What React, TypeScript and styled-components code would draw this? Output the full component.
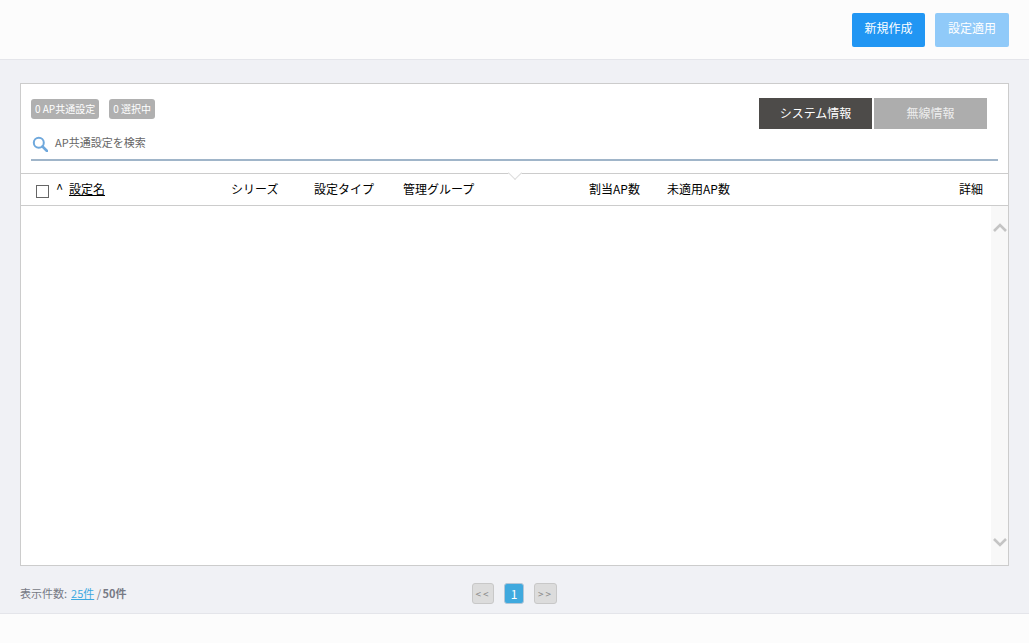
import React from "react";
import styled, { createGlobalStyle } from "styled-components";

const Global = createGlobalStyle`
  html, body { margin: 0; padding: 0; height: 100%; overflow: hidden; }
  body { font-family: "Noto Sans CJK JP", "Noto Sans", sans-serif; background: #f0f1f5; }
  * { box-sizing: border-box; }
`;

const Page = styled.div`
  display: flex;
  flex-direction: column;
  width: 1029px;
  height: 643px;
  background: #f0f1f5;
`;

const TopBar = styled.header`
  display: flex;
  justify-content: flex-end;
  gap: 10px;
  height: 60px;
  padding: 13px 20px 0 0;
  background: #fcfcfc;
  border-bottom: 1px solid #e4e5ea;
`;

const ActionButton = styled.button<{ $muted?: boolean }>`
  width: ${(p) => (p.$muted ? 74 : 73)}px;
  height: 34px;
  padding: 0 0 6px;
  border: 0;
  border-radius: 2px;
  background: ${(p) => (p.$muted ? "#90caf9" : "#2196f3")};
  color: #fff;
  font: inherit;
  font-size: 12px;
`;

const Card = styled.section`
  display: flex;
  flex-direction: column;
  width: 989px;
  height: 483px;
  margin: 23px 0 0 20px;
  background: #fff;
  border: 1px solid #ccc;
`;

const CardTop = styled.div`
  display: flex;
  justify-content: space-between;
  height: 53px;
  padding: 14px 21px 0 10px;
`;

const BadgeRow = styled.div`
  display: flex;
  gap: 10px;
  padding-top: 1px;
`;

const Badge = styled.span`
  height: 20px;
  padding: 0 4px;
  border-radius: 3px;
  background: #b0b0b0;
  color: #fff;
  font-size: 10px;
  line-height: 19px;
  white-space: nowrap;
`;

const TabRow = styled.div`
  display: flex;
  gap: 2px;
`;

const Tab = styled.div<{ $active?: boolean }>`
  width: 113px;
  height: 31px;
  background: ${(p) => (p.$active ? "#4d4b49" : "#adadad")};
  color: ${(p) => (p.$active ? "#fff" : "#eee")};
  font-size: 12px;
  line-height: 29px;
  text-align: center;
`;

const SearchBar = styled.div`
  display: flex;
  align-items: center;
  gap: 7px;
  height: 24px;
  margin: 0 10px;
  padding: 0 0 0 1px;
  border-bottom: 2px solid #a0b5c9;
`;

const SearchHint = styled.span`
  color: #666;
  font-size: 11px;
  line-height: 14px;
  position: relative;
  top: -6px;
`;

const SearchIcon = styled.svg`
  width: 16px;
  height: 16px;
  flex: none;
  position: relative;
  top: -4px;
`;

const HeadRow = styled.div`
  position: relative;
  display: flex;
  align-items: center;
  height: 33px;
  margin-top: 12px;
  padding: 0 0 2px 15px;
  border-top: 1px solid #ccc;
  border-bottom: 1px solid #ccc;
  color: #000;
  font-size: 12px;
`;

const Notch = styled.span`
  position: absolute;
  left: 489px;
  top: -6px;
  width: 10px;
  height: 10px;
  background: #fff;
  border-right: 1px solid #ddd;
  border-bottom: 1px solid #ddd;
  transform: rotate(45deg);
`;

const Check = styled.span`
  flex: none;
  width: 13px;
  height: 13px;
  margin: 5px 7px 0 0;
  border: 1px solid #666;
  background: #fff;
`;

const Caret = styled.span`
  flex: none;
  width: 13px;
  font-size: 13px;
`;

const Col = styled.span<{ $w: number; $link?: boolean }>`
  flex: none;
  width: ${(p) => p.$w}px;
  text-decoration: ${(p) => (p.$link ? "underline" : "none")};
  white-space: nowrap;
`;

const Body = styled.div`
  flex: 1;
  display: flex;
  justify-content: flex-end;
`;

const ScrollTrack = styled.div`
  display: flex;
  flex-direction: column;
  justify-content: space-between;
  align-items: center;
  width: 17px;
  padding: 17px 0 18px;
  background: #f8f8f8;
`;

const Chevron = styled.svg`
  width: 14px;
  height: 9px;
`;

const BottomRow = styled.div`
  display: grid;
  grid-template-columns: 1fr auto 1fr;
  align-items: center;
  height: 47px;
  padding: 7px 20px 0;
  color: #777a85;
  font-size: 11px;
`;

const CountInfo = styled.div`
  white-space: nowrap;
`;

const CountLink = styled.span`
  color: #3ba8e0;
  text-decoration: underline;
  margin-left: 4px;
`;

const CountTotal = styled.strong`
  font-weight: 700;
  margin-left: -1px;
`;

const Pager = styled.nav`
  display: flex;
  gap: 10px;
`;

const PageBtn = styled.span<{ $on?: boolean; $w: number }>`
  width: ${(p) => p.$w}px;
  height: 21px;
  border: 1px solid ${(p) => (p.$on ? "#b4c6d6" : "#c8c8c8")};
  border-radius: 3px;
  background: ${(p) => (p.$on ? "#3fa9de" : "#dcdcdc")};
  color: ${(p) => (p.$on ? "#fff" : "#888")};
  font-size: ${(p) => (p.$on ? 12 : 10)}px;
  line-height: 19px;
  text-align: center;
  letter-spacing: ${(p) => (p.$on ? 0 : 2)}px;
`;

const BottomBar = styled.footer`
  flex: 1;
  background: #fcfcfc;
  border-top: 1px solid #e4e5ea;
`;

export default function App() {
  return (
    <Page>
      <Global />
      <TopBar>
        <ActionButton>新規作成</ActionButton>
        <ActionButton $muted>設定適用</ActionButton>
      </TopBar>
      <Card>
        <CardTop>
          <BadgeRow>
            <Badge>0 AP共通設定</Badge>
            <Badge>0 選択中</Badge>
          </BadgeRow>
          <TabRow>
            <Tab $active>システム情報</Tab>
            <Tab>無線情報</Tab>
          </TabRow>
        </CardTop>
        <SearchBar>
          <SearchIcon viewBox="0 0 16 16" fill="none" stroke="#6fa8dc">
            <circle cx="6.8" cy="6.8" r="5" strokeWidth="2" />
            <path d="M10.5 10.5L15 15" strokeWidth="2.6" strokeLinecap="round" />
          </SearchIcon>
          <SearchHint>AP共通設定を検索</SearchHint>
        </SearchBar>
        <HeadRow>
          <Notch />
          <Check />
          <Caret>^</Caret>
          <Col $w={162} $link>設定名</Col>
          <Col $w={83}>シリーズ</Col>
          <Col $w={89}>設定タイプ</Col>
          <Col $w={186}>管理グループ</Col>
          <Col $w={78}>割当AP数</Col>
          <Col $w={292}>未適用AP数</Col>
          <Col $w={24}>詳細</Col>
        </HeadRow>
        <Body>
          <ScrollTrack>
            <Chevron viewBox="0 0 14 9" fill="none" stroke="#c4c4c4" strokeWidth="2.6">
              <path d="M1 8l6-6 6 6" />
            </Chevron>
            <Chevron viewBox="0 0 14 9" fill="none" stroke="#c4c4c4" strokeWidth="2.6">
              <path d="M1 1l6 6 6-6" />
            </Chevron>
          </ScrollTrack>
        </Body>
      </Card>
      <BottomRow>
        <CountInfo>
          表示件数:<CountLink>25件</CountLink> / <CountTotal>50件</CountTotal>
        </CountInfo>
        <Pager>
          <PageBtn $w={22}>&lt;&lt;</PageBtn>
          <PageBtn $w={20} $on>1</PageBtn>
          <PageBtn $w={23}>&gt;&gt;</PageBtn>
        </Pager>
      </BottomRow>
      <BottomBar />
    </Page>
  );
}
